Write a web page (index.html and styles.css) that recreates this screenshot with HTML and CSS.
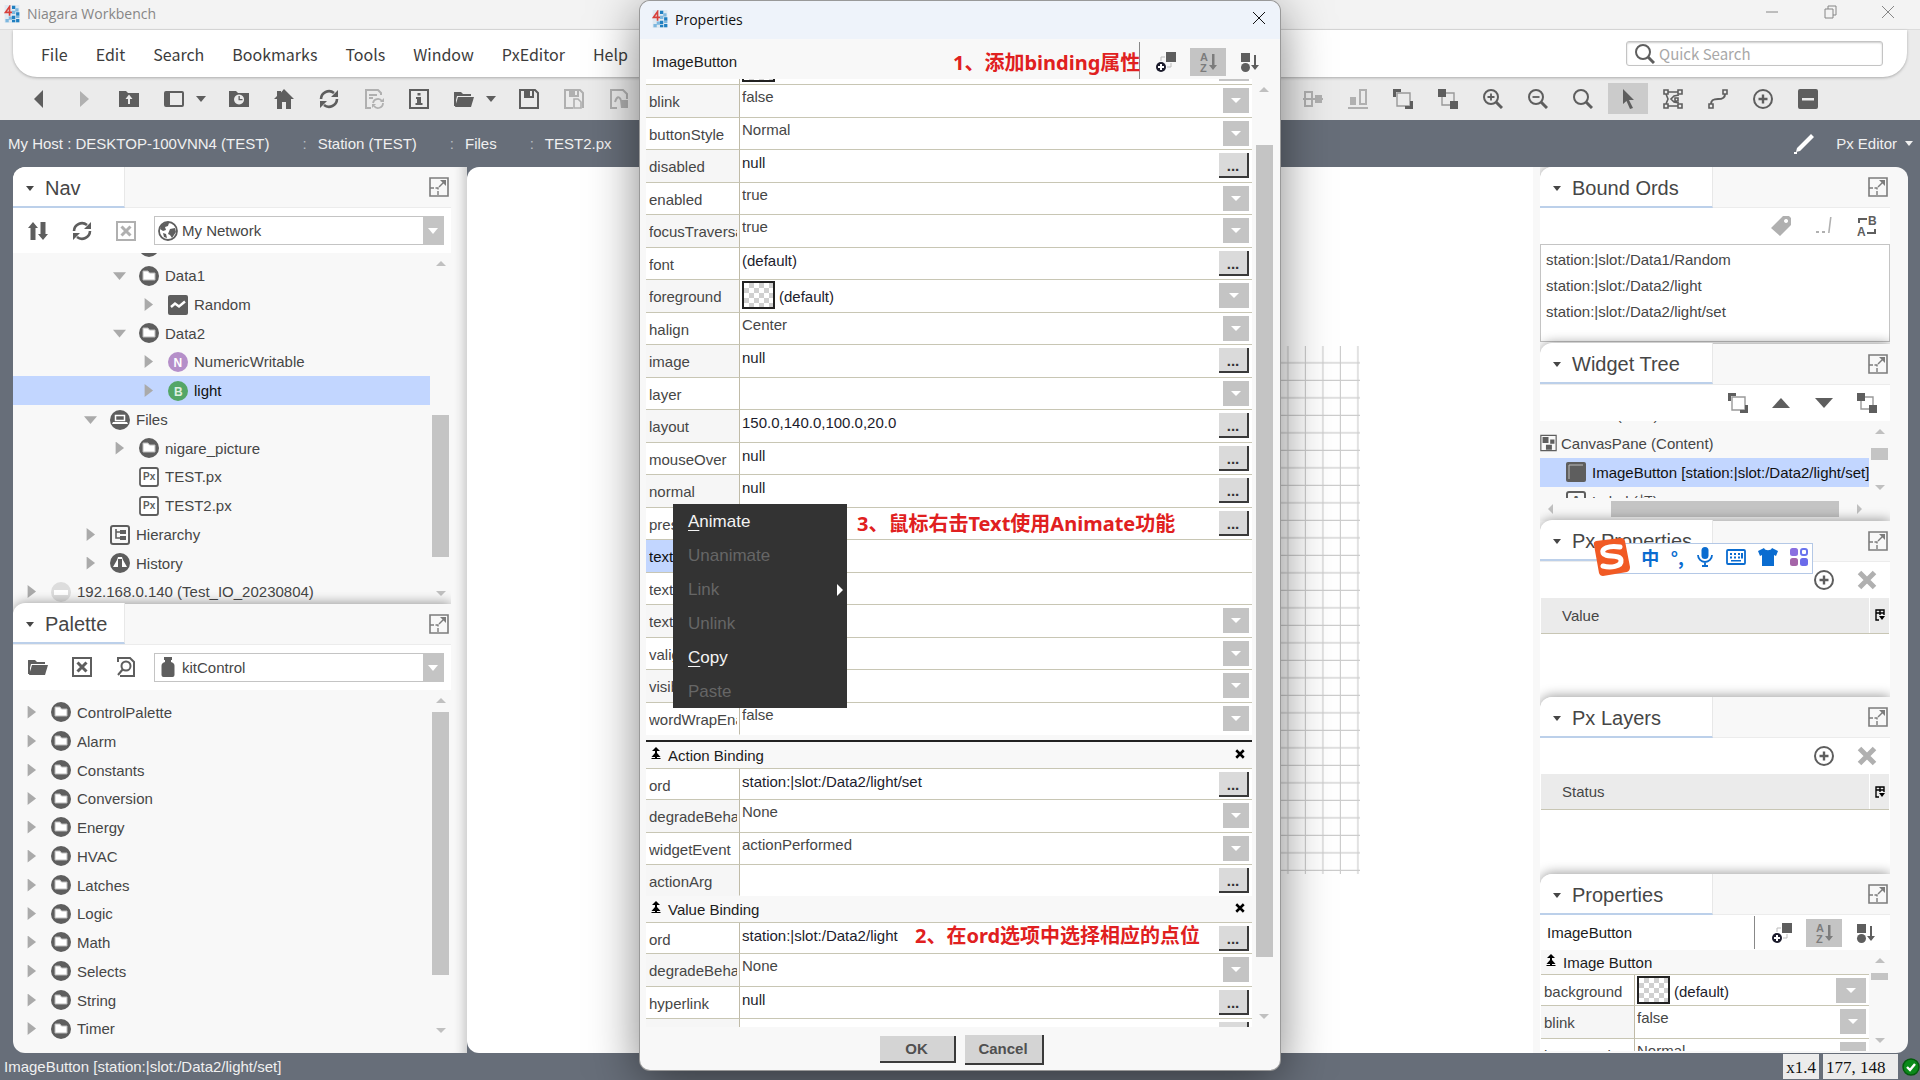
FILE: index.html
```
<!DOCTYPE html>
<html lang="zh-CN">
<head>
    <meta charset="UTF-8">
    <meta name="viewport" content="width=device-width, initial-scale=1.0">
    <title>Niagara Workbench</title>
    <link rel="stylesheet" href="styles.css">
</head>
<body>
    <!-- icon sprite -->
    <svg class="sprite" aria-hidden="true">
        <symbol id="i-logo" viewBox="0 0 18 22"><path fill="#dfe9f1" d="M0 0h18v22H0z"/><path fill="#1f7fc0" d="M9 1h4v4H9zM14 9h4v4h-4zM9 13h4v4H9zM14 17h4v4h-4zM9 18h4v3H9z"/><path fill="#7db7de" d="M13 4h4v4h-4zM9 7h4v4H9zM1 17h4v4H1zM5 14h4v4H5zM14 13h4v3h-4z"/><path fill="none" stroke="#d8403a" stroke-width="2" d="M6 13V2L1 9h8"/></symbol>
        <symbol id="i-back" viewBox="0 0 20 20"><path d="M14 1v18L5 10z"/></symbol>
        <symbol id="i-fwd" viewBox="0 0 20 20"><path d="M6 2v16l9-8z"/></symbol>
        <symbol id="i-folderup" viewBox="0 0 20 20"><path fill-rule="evenodd" d="M0 2h7l2 2h11v14H0zM10 5.500l-3.500 4.500H9v5h2v-5h2.500z"/></symbol>
        <symbol id="i-layout" viewBox="0 0 20 20"><path fill-rule="evenodd" d="M2 2h16a2 2 0 0 1 2 2v12a2 2 0 0 1-2 2H2a2 2 0 0 1-2-2V4a2 2 0 0 1 2-2zM6 4v12h12V4z"/></symbol>
        <symbol id="i-folderclock" viewBox="0 0 20 20"><path fill-rule="evenodd" d="M0 2h7l2 2h11v14H0zM10 5.500a5 5 0 1 0 .1 0zM9.500 7h1.300v3h2.700v1.300h-4z"/></symbol>
        <symbol id="i-home" viewBox="0 0 20 20"><path d="M10 0l10 10h-3v10h-5v-7H8v7H3V10H0l3-3V2h4v1.500z"/></symbol>
        <symbol id="i-refresh" viewBox="0 0 20 20"><path fill="none" stroke="currentColor" stroke-width="2.600" d="M2 10a8 8 0 0 1 13-6M18 10a8 8 0 0 1-13 6"/><path d="M19 1v7h-7zM1 19v-7h7z"/></symbol>
        <symbol id="i-docrefresh" viewBox="0 0 20 20"><path fill="none" stroke="currentColor" stroke-width="2" d="M7 19H2V1h12l3 3v2M5 6h8M5 9h4"/><path fill="none" stroke="currentColor" stroke-width="1.800" d="M9 14a5 5 0 0 1 9-2M19 14a5 5 0 0 1-9 3"/><path d="M20 9v4h-4zM8 19v-4h4z"/></symbol>
        <symbol id="i-info" viewBox="0 0 20 20"><path fill="none" stroke="currentColor" stroke-width="2" d="M1 1h18v18H1z"/><path d="M8.500 4h3v2.500h-3zM7 8h5v6h1.500v2h-7v-2H8v-4H7z"/></symbol>
        <symbol id="i-folder" viewBox="0 0 20 20"><path d="M0 3h7l2 2h8v2H3L1 15z"/><path d="M4 8h16l-3 10H1z"/><path d="M0 4h2v13H0z"/></symbol>
        <symbol id="i-save" viewBox="0 0 20 20"><path fill="none" stroke="currentColor" stroke-width="2" d="M1 1h15l3 3v15H1z"/><path fill-rule="evenodd" d="M5 1h10v8H5zM11 2v5h2V2z"/></symbol>
        <symbol id="i-savedoc" viewBox="0 0 20 20"><path fill="none" stroke="currentColor" stroke-width="2" d="M9 19H1V1h15l3 3v15"/><path fill-rule="evenodd" d="M5 1h10v7H5zM11 2v4h2V2z"/><path fill="none" stroke="currentColor" stroke-width="1.600" d="M10 10h4l3 3v6h-7z"/></symbol>
        <symbol id="i-docnote" viewBox="0 0 20 20"><path fill="none" stroke="currentColor" stroke-width="2" d="M8 19H2V1h12l4 4v5M6 13c2-6 4-6 6-2"/><path d="M11 11h8v8h-7z"/></symbol>
        <symbol id="i-alignmid" viewBox="0 0 20 20"><path fill="none" stroke="currentColor" stroke-width="2" d="M2 3h7v14H2zM0 10h11"/><path d="M12 6h7v8h-7zM10 9h10v2H10z"/></symbol>
        <symbol id="i-alignbot" viewBox="0 0 20 20"><path d="M0 18h20v2H0zM2 8h6v8H2z"/><path fill="none" stroke="currentColor" stroke-width="2" d="M12 1h6v14h-6z"/></symbol>
        <symbol id="i-front" viewBox="0 0 20 20"><path fill="none" stroke="#999" stroke-width="1.400" d="M4 4h13v13H4z"/><path d="M0 0h8v3H3v5H0zM20 20h-8v-3h5v-5h3z"/></symbol>
        <symbol id="i-backward" viewBox="0 0 20 20"><path fill="none" stroke="#999" stroke-width="1.400" d="M4 4h12v12H4z"/><path d="M0 0h8v8H0zM12 12h8v8h-8z"/></symbol>
        <symbol id="i-zoomin" viewBox="0 0 20 20"><g fill="none" stroke="currentColor"><circle cx="8" cy="8" r="7" stroke-width="2"/><path stroke-width="3" d="M13 13l6 6"/><path stroke-width="1.800" d="M4.500 8h7M8 4.500v7"/></g></symbol>
        <symbol id="i-zoomout" viewBox="0 0 20 20"><g fill="none" stroke="currentColor"><circle cx="8" cy="8" r="7" stroke-width="2"/><path stroke-width="3" d="M13 13l6 6"/><path stroke-width="1.800" d="M4.500 8h7"/></g></symbol>
        <symbol id="i-zoom" viewBox="0 0 20 20"><g fill="none" stroke="currentColor"><circle cx="8" cy="8" r="7" stroke-width="2"/><path stroke-width="3" d="M13 13l6 6"/></g></symbol>
        <symbol id="i-cursor" viewBox="0 0 20 20"><path d="M5 0l11 11h-5l4 8-3 1-3.500-8L5 15z"/></symbol>
        <symbol id="i-polygon" viewBox="0 0 20 20"><g fill="none" stroke="currentColor" stroke-width="1.600"><path d="M1 1h4v4H1zM15 1h4v4h-4zM1 15h4v4H1zM15 15h4v4h-4zM5 3h10M3 5l2 5-2 5M5 17h10"/><path d="M16 6l-5 1-3 3 3 3 5 1M12 9h3v3h-3z"/></g></symbol>
        <symbol id="i-path" viewBox="0 0 20 20"><g fill="none" stroke="currentColor"><path stroke-width="1.600" d="M15 1h4v4h-4zM1 15h4v4H1z"/><path stroke-width="2" d="M17 5c0 5-4 5-7 5s-7 0-7 5"/></g></symbol>
        <symbol id="i-plus" viewBox="0 0 20 20"><g fill="none" stroke="currentColor"><circle cx="10" cy="10" r="9" stroke-width="2"/><path stroke-width="2.400" d="M5.500 10h9M10 5.500v9"/></g></symbol>
        <symbol id="i-minus" viewBox="0 0 20 20"><path fill-rule="evenodd" d="M2 0h16a2 2 0 0 1 2 2v16a2 2 0 0 1-2 2H2a2 2 0 0 1-2-2V2a2 2 0 0 1 2-2zM4 9v2.500h12V9z"/></symbol>
        <symbol id="i-pencil" viewBox="0 0 20 20"><path d="M17 0l3 3-14 14-4 1 1-4zM0 18h3v2H0z"/></symbol>
        <symbol id="i-expand" viewBox="0 0 20 20"><g fill="none" stroke="currentColor"><path stroke-width="1.600" d="M1 1h18v18H1z"/><path stroke-dasharray="4 1.500" stroke-width="1.400" d="M1 11h8v8"/><path stroke-width="1.400" d="M10 10l6-6"/></g><path d="M17 3v6l-6-6z"/></symbol>
        <symbol id="i-updown" viewBox="0 0 20 20"><path d="M5 1l5 6H7.500v12h-5V7H0zM15 19l5-6h-2.500V1h-5v12H10z"/></symbol>
        <symbol id="i-boxx" viewBox="0 0 20 20"><g fill="none" stroke="currentColor"><path stroke-width="2" d="M1 1h18v18H1z"/><path stroke-width="3" d="M5.500 5.500l9 9M14.500 5.500l-9 9"/></g></symbol>
        <symbol id="i-docfind" viewBox="0 0 20 20"><g fill="none" stroke="currentColor" stroke-width="2"><path d="M2 5V1h12l4 4v14H4"/><circle cx="10" cy="9" r="4.500"/><path d="M7 12l-5 6"/></g></symbol>
        <symbol id="i-globe" viewBox="0 0 20 20"><circle cx="10" cy="10" r="9" fill="#fff" stroke="currentColor" stroke-width="1.800"/><path d="M3 5c3-4 6-3 8-3l-1 3-3 1 1 3-3 1-3-2zM12 8l5-1 1 4-4 6-2-3-2-1zM5 12l3 1 1 4-3-1z"/></symbol>
        <symbol id="i-jar" viewBox="0 0 20 20"><path d="M6 0h8v3h-1v2c3 1 3.500 2 3.500 4v9a2 2 0 0 1-2 2h-9a2 2 0 0 1-2-2V9c0-2 .5-3 3.500-4V3H6z"/></symbol>
        <symbol id="i-circlefolder" viewBox="0 0 20 20"><circle cx="10" cy="10" r="10"/><path fill="#fff" stroke="#bbb" d="M4 5h5l1.500 2H16v7H4z"/></symbol>
        <symbol id="i-wave" viewBox="0 0 20 20"><rect width="20" height="20" rx="2"/><path fill="none" stroke="#fff" stroke-width="2.400" d="M3 12l4-3.500 4 3 6-5"/></symbol>
        <symbol id="i-laptop" viewBox="0 0 20 20"><circle cx="10" cy="10" r="10"/><path fill="none" stroke="#fff" stroke-width="1.500" d="M5.500 5.500h9v5h-9z"/><path fill="#fff" d="M3 12h14l1 2H2z"/></symbol>
        <symbol id="i-hier" viewBox="0 0 20 20"><g fill="none" stroke="currentColor"><rect x="1" y="1" width="18" height="18" rx="2" stroke-width="2"/><path stroke-width="1.600" d="M6 4v9h5M6 7h5"/></g><path d="M10 5h6v4h-6zM10 11h6v4h-6z"/></symbol>
        <symbol id="i-hist" viewBox="0 0 20 20"><circle cx="10" cy="10" r="10"/><path fill="#fff" d="M8 4h4l1 3 4 7H3l4-7z"/><path d="M8 6h4v10H8z"/></symbol>
        <symbol id="i-drive" viewBox="0 0 20 20"><circle cx="10" cy="10" r="10"/><path fill="#fff" d="M3 8h14v5H3z"/></symbol>
        <symbol id="i-px" viewBox="0 0 20 20"><rect x="1" y="1" width="18" height="18" rx="2" fill="#fff" stroke="currentColor" stroke-width="1.800"/><text x="4" y="13" font-size="10" font-weight="bold" font-family="Liberation Sans, sans-serif">Px</text></symbol>
        <symbol id="i-n" viewBox="0 0 20 20"><circle cx="10" cy="10" r="10" fill="#b58fc9"/><text x="5.500" y="14.500" font-size="12" font-weight="bold" fill="#fff" font-family="Liberation Sans, sans-serif">N</text></symbol>
        <symbol id="i-b" viewBox="0 0 20 20"><circle cx="10" cy="10" r="10" fill="#54a667"/><text x="6" y="14.500" font-size="12" font-weight="bold" fill="#dff0e2" font-family="Liberation Sans, sans-serif">B</text></symbol>
        <symbol id="i-tag" viewBox="0 0 20 20"><path fill-rule="evenodd" d="M12 0h6l2 2v7L9 20 0 12zM15 3a2 2 0 1 0 .1 0z"/></symbol>
        <symbol id="i-rel" viewBox="0 0 20 20"><path d="M2 15h3v2H2zM8 15h3v2H8zM16 1h1.600l-2 16H14z"/></symbol>
        <symbol id="i-ab" viewBox="0 0 20 20"><g fill="none" stroke="currentColor" stroke-width="2"><path d="M2 7V3h8M18 13v4h-8"/></g><text x="0" y="20" font-size="12" font-weight="bold" font-family="Liberation Sans, sans-serif">A</text><text x="11" y="9" font-size="12" font-weight="bold" font-family="Liberation Sans, sans-serif">B</text></symbol>
        <symbol id="i-up" viewBox="0 0 20 20"><path d="M10 5l9 10H1z"/></symbol>
        <symbol id="i-down" viewBox="0 0 20 20"><path d="M10 15L1 5h18z"/></symbol>
        <symbol id="i-x" viewBox="0 0 20 20"><path fill="none" stroke="currentColor" stroke-width="5" d="M2.500 2.500l15 15M17.500 2.500l-15 15"/></symbol>
        <symbol id="i-pane" viewBox="0 0 20 20"><path fill="none" stroke="currentColor" stroke-width="1.400" d="M1 1h18v18H1z"/><path d="M3 3h7v7H3zM12 6h5v5h-5zM7 12h7v6H7z"/></symbol>
        <symbol id="i-btn" viewBox="0 0 20 20"><rect width="20" height="20" rx="2"/><path fill="none" stroke="#bbb" d="M3 17V3h14"/></symbol>
        <symbol id="i-label" viewBox="0 0 20 20"><rect x="1" y="1" width="18" height="18" rx="2" fill="none" stroke="currentColor" stroke-width="2"/><text x="5" y="15" font-size="14" font-weight="bold" font-family="Liberation Sans, sans-serif">A</text></symbol>
        <symbol id="i-addbind" viewBox="0 0 20 20"><path d="M10 0h10v10H10z"/><path fill="none" stroke="#bbb" d="M5 9V5h4M15 11v4h-4"/><circle cx="5" cy="15" r="5" fill="#1c1c2c"/><path stroke="#fff" stroke-width="2" d="M2 15h6M5 12v6"/></symbol>
        <symbol id="i-az" viewBox="0 0 20 20"><text x="2" y="9" font-size="11" font-weight="bold" font-family="Liberation Sans, sans-serif">A</text><text x="2" y="20" font-size="11" font-weight="bold" font-family="Liberation Sans, sans-serif">Z</text><path d="M14 2h2.500v11H19l-4 5-4-5h3z"/></symbol>
        <symbol id="i-sortcat" viewBox="0 0 20 20"><path d="M1 1h9v9H1zM14 3h2v10h3l-4 5-4-5h3z"/><circle cx="5.500" cy="15.500" r="4.500"/></symbol>
        <symbol id="i-collapse" viewBox="0 0 10 12"><path d="M5 0l4 4H6v2l3.500 4H6v1h3.500v1h-9v-1H4v-1H.5L4 6V4H1z"/></symbol>
        <symbol id="i-colmenu" viewBox="0 0 10 12"><path fill="none" stroke="#000" stroke-width="1.400" d="M4 11H1V1h8v5M1 4h8M5 1v5"/><path d="M4 7h6l-3 4z"/></symbol>
        <symbol id="i-mic" viewBox="0 0 20 20"><rect x="6.500" y="0" width="7" height="12" rx="3.500"/><path fill="none" stroke="currentColor" stroke-width="1.800" d="M3 8a7 7 0 0 0 14 0M10 15v3"/><path d="M7 18h6v2H7z"/></symbol>
        <symbol id="i-kbd" viewBox="0 0 20 20"><rect x="1" y="3" width="18" height="14" rx="1" fill="none" stroke="currentColor" stroke-width="1.800"/><path d="M4 6h2v2H4zM8 6h2v2H8zM12 6h2v2h-2zM4 9.500h2v2H4zM8 9.500h2v2H8zM12 9.500h2v2h-2zM15 6h2v5.500h-2zM5 13h10v1.600H5z"/></symbol>
        <symbol id="i-shirt" viewBox="0 0 20 20"><path d="M6 1c1 3 7 3 8 0l6 3-2 5-2-1v11H4V8L2 9 0 4z"/></symbol>
        <symbol id="i-apps" viewBox="0 0 20 20"><rect x="1" y="1" width="8" height="8" rx="2.500" fill="#8a6fe0"/><rect x="12" y="2" width="6" height="6" rx="2" fill="none" stroke="#6a74ee" stroke-width="2"/><rect x="1" y="11" width="8" height="8" rx="2.500" fill="#a565a8"/><rect x="11" y="11" width="8" height="8" rx="2.500" fill="#6b6bea"/></symbol>
        <symbol id="i-sogou" viewBox="0 0 38 38"><path fill="#f15a24" d="M2 7Q1 4 4 3L29 0q3 0 4 3l5 26q0 4-3 5L11 38q-3 0-4-3z"/><path fill="none" stroke="#fff" stroke-width="5" stroke-linecap="round" d="M28 9C16 7 9 11 11 15c2 5 17 1 18 7 1 7-11 8-18 6"/></symbol>
    </svg>

    <header class="titlebar">
        <svg class="logo"><use href="#i-logo"/></svg>
        <span>Niagara Workbench</span>
        <div class="win-controls">
            <button aria-label="Minimize"><svg viewBox="0 0 14 14"><path d="M1 7h12"/></svg></button>
            <button aria-label="Restore"><svg viewBox="0 0 14 14"><path d="M2 4h8v9H2zM5 4V1h8v9h-3"/></svg></button>
            <button aria-label="Close"><svg viewBox="0 0 14 14"><path d="M1 1l12 12M13 1L1 13"/></svg></button>
        </div>
    </header>

    <div class="menu-wrap">
        <nav class="menubar">
            <button>File</button>
            <button>Edit</button>
            <button>Search</button>
            <button>Bookmarks</button>
            <button>Tools</button>
            <button>Window</button>
            <button>PxEditor</button>
            <button>Help</button>
            <label class="search">
                <svg class="icon"><use href="#i-zoom"/></svg>
                <input type="text" placeholder="Quick Search" aria-label="Quick Search">
            </label>
        </nav>
    </div>

    <div class="toolbar">
        <button aria-label="Back"><svg class="icon"><use href="#i-back"/></svg></button>
        <button aria-label="Forward" disabled><svg class="icon"><use href="#i-fwd"/></svg></button>
        <button aria-label="Up level"><svg class="icon"><use href="#i-folderup"/></svg></button>
        <button aria-label="Side bars"><svg class="icon"><use href="#i-layout"/></svg></button>
        <button class="drop" aria-label="Side bars menu"></button>
        <button aria-label="Recent"><svg class="icon"><use href="#i-folderclock"/></svg></button>
        <button aria-label="Home"><svg class="icon"><use href="#i-home"/></svg></button>
        <button aria-label="Refresh"><svg class="icon"><use href="#i-refresh"/></svg></button>
        <button aria-label="Reload" disabled><svg class="icon"><use href="#i-docrefresh"/></svg></button>
        <button aria-label="Info"><svg class="icon"><use href="#i-info"/></svg></button>
        <button aria-label="Open"><svg class="icon"><use href="#i-folder"/></svg></button>
        <button class="drop" aria-label="Open menu"></button>
        <button aria-label="Save"><svg class="icon"><use href="#i-save"/></svg></button>
        <button aria-label="Save all" disabled><svg class="icon"><use href="#i-savedoc"/></svg></button>
        <button aria-label="Export" disabled><svg class="icon"><use href="#i-docnote"/></svg></button>
        <div class="tools-right">
            <button aria-label="Align middle" disabled><svg class="icon"><use href="#i-alignmid"/></svg></button>
            <button aria-label="Align bottom" disabled><svg class="icon"><use href="#i-alignbot"/></svg></button>
            <button aria-label="To front"><svg class="icon"><use href="#i-front"/></svg></button>
            <button aria-label="To back"><svg class="icon"><use href="#i-backward"/></svg></button>
            <button aria-label="Zoom in"><svg class="icon"><use href="#i-zoomin"/></svg></button>
            <button aria-label="Zoom out"><svg class="icon"><use href="#i-zoomout"/></svg></button>
            <button aria-label="Zoom reset"><svg class="icon"><use href="#i-zoom"/></svg></button>
            <button aria-label="Select" class="active"><svg class="icon"><use href="#i-cursor"/></svg></button>
            <button aria-label="Polygon"><svg class="icon"><use href="#i-polygon"/></svg></button>
            <button aria-label="Path"><svg class="icon"><use href="#i-path"/></svg></button>
            <button aria-label="Add point"><svg class="icon"><use href="#i-plus"/></svg></button>
            <button aria-label="Delete point"><svg class="icon"><use href="#i-minus"/></svg></button>
        </div>
    </div>

    <div class="locator">
        <a href="#">My Host : DESKTOP-100VNN4 (TEST)</a>
        <a href="#">Station (TEST)</a>
        <a href="#">Files</a>
        <a href="#">TEST2.px</a>
        <button class="view-pick">
            <svg class="icon"><use href="#i-pencil"/></svg>
            Px Editor
            <i class="caret"></i>
        </button>
    </div>

    <main class="workspace">
        <aside class="side left">
            <section class="pane nav">
                <header class="pane-head"><h2><i class="caret"></i>Nav</h2><button aria-label="Expand Nav"><svg class="icon"><use href="#i-expand"/></svg></button></header>
                <div class="pane-tools">
                    <button aria-label="Sort"><svg class="icon"><use href="#i-updown"/></svg></button>
                    <button aria-label="Refresh tree"><svg class="icon"><use href="#i-refresh"/></svg></button>
                    <button aria-label="Close tree" disabled><svg class="icon"><use href="#i-boxx"/></svg></button>
                    <div class="combo">
                        <svg class="icon"><use href="#i-globe"/></svg>
                        <select aria-label="Network"><option>My Network</option></select>
                    </div>
                </div>
                <div class="scroller">
                    <ul class="tree scrolled">
                        <li class="lv3"><i></i><svg class="icon"><use href="#i-circlefolder"/></svg></li>
                        <li class="lv3"><i class="open"></i><svg class="icon"><use href="#i-circlefolder"/></svg>Data1</li>
                        <li class="lv4"><i class="shut"></i><svg class="icon"><use href="#i-wave"/></svg>Random</li>
                        <li class="lv3"><i class="open"></i><svg class="icon"><use href="#i-circlefolder"/></svg>Data2</li>
                        <li class="lv4"><i class="shut"></i><svg class="icon"><use href="#i-n"/></svg>NumericWritable</li>
                        <li class="lv4 selected"><i class="shut"></i><svg class="icon"><use href="#i-b"/></svg>light</li>
                        <li class="lv2"><i class="open"></i><svg class="icon"><use href="#i-laptop"/></svg>Files</li>
                        <li class="lv3"><i class="shut"></i><svg class="icon"><use href="#i-circlefolder"/></svg>nigare_picture</li>
                        <li class="lv3"><i></i><svg class="icon"><use href="#i-px"/></svg>TEST.px</li>
                        <li class="lv3"><i></i><svg class="icon"><use href="#i-px"/></svg>TEST2.px</li>
                        <li class="lv2"><i class="shut"></i><svg class="icon"><use href="#i-hier"/></svg>Hierarchy</li>
                        <li class="lv2"><i class="shut"></i><svg class="icon"><use href="#i-hist"/></svg>History</li>
                        <li><i class="shut"></i><svg class="icon faded"><use href="#i-drive"/></svg>192.168.0.140 (Test_IO_20230804)</li>
                    </ul>
                    <div class="vbar"><span class="thumb thumb-nav"></span></div>
                </div>
            </section>
            <section class="pane palette">
                <header class="pane-head"><h2><i class="caret"></i>Palette</h2><button aria-label="Expand Palette"><svg class="icon"><use href="#i-expand"/></svg></button></header>
                <div class="pane-tools">
                    <button aria-label="Open palette"><svg class="icon"><use href="#i-folder"/></svg></button>
                    <button aria-label="Close palette"><svg class="icon"><use href="#i-boxx"/></svg></button>
                    <button aria-label="Preview"><svg class="icon"><use href="#i-docfind"/></svg></button>
                    <div class="combo">
                        <svg class="icon"><use href="#i-jar"/></svg>
                        <select aria-label="Palette"><option>kitControl</option></select>
                    </div>
                </div>
                <div class="scroller">
                    <ul class="tree">
                        <li><i class="shut"></i><svg class="icon"><use href="#i-circlefolder"/></svg>ControlPalette</li>
                        <li><i class="shut"></i><svg class="icon"><use href="#i-circlefolder"/></svg>Alarm</li>
                        <li><i class="shut"></i><svg class="icon"><use href="#i-circlefolder"/></svg>Constants</li>
                        <li><i class="shut"></i><svg class="icon"><use href="#i-circlefolder"/></svg>Conversion</li>
                        <li><i class="shut"></i><svg class="icon"><use href="#i-circlefolder"/></svg>Energy</li>
                        <li><i class="shut"></i><svg class="icon"><use href="#i-circlefolder"/></svg>HVAC</li>
                        <li><i class="shut"></i><svg class="icon"><use href="#i-circlefolder"/></svg>Latches</li>
                        <li><i class="shut"></i><svg class="icon"><use href="#i-circlefolder"/></svg>Logic</li>
                        <li><i class="shut"></i><svg class="icon"><use href="#i-circlefolder"/></svg>Math</li>
                        <li><i class="shut"></i><svg class="icon"><use href="#i-circlefolder"/></svg>Selects</li>
                        <li><i class="shut"></i><svg class="icon"><use href="#i-circlefolder"/></svg>String</li>
                        <li><i class="shut"></i><svg class="icon"><use href="#i-circlefolder"/></svg>Timer</li>
                    </ul>
                    <div class="vbar"><span class="thumb thumb-palette"></span></div>
                </div>
            </section>
        </aside>

        <div class="canvas">
            <svg class="grid" width="719" height="528">
                <defs>
                    <pattern id="cell" width="17.5" height="17.5" patternUnits="userSpaceOnUse">
                        <path d="M0 17H17.5M17 0V17.5" fill="none" stroke="#ccc" stroke-width="1.300"/>
                    </pattern>
                </defs>
                <rect width="719" height="528" fill="url(#cell)"/>
            </svg>
        </div>

        <aside class="side right">
            <section class="pane">
                <header class="pane-head"><h2><i class="caret"></i>Bound Ords</h2><button aria-label="Expand Bound Ords"><svg class="icon"><use href="#i-expand"/></svg></button></header>
                <div class="pane-tools end">
                    <button aria-label="Tag" disabled><svg class="icon"><use href="#i-tag"/></svg></button>
                    <button aria-label="Relativize" disabled><svg class="icon"><use href="#i-rel"/></svg></button>
                    <button aria-label="Replace"><svg class="icon"><use href="#i-ab"/></svg></button>
                </div>
                <ul class="ords">
                    <li>station:|slot:/Data1/Random</li>
                    <li>station:|slot:/Data2/light</li>
                    <li>station:|slot:/Data2/light/set</li>
                </ul>
            </section>
            <section class="pane">
                <header class="pane-head"><h2><i class="caret"></i>Widget Tree</h2><button aria-label="Expand Widget Tree"><svg class="icon"><use href="#i-expand"/></svg></button></header>
                <div class="pane-tools end">
                    <button aria-label="To front"><svg class="icon"><use href="#i-front"/></svg></button>
                    <button aria-label="Move up"><svg class="icon"><use href="#i-up"/></svg></button>
                    <button aria-label="Move down"><svg class="icon"><use href="#i-down"/></svg></button>
                    <button aria-label="To back"><svg class="icon"><use href="#i-backward"/></svg></button>
                </div>
                <div class="scroller">
                    <ul class="tree widgets">
                        <li>ScrollPane (Root)</li>
                        <li class="w1"><svg class="icon"><use href="#i-pane"/></svg>CanvasPane (Content)</li>
                        <li class="w2 selected"><svg class="icon"><use href="#i-btn"/></svg>ImageButton [station:|slot:/Data2/light/set]</li>
                        <li class="w2"><svg class="icon"><use href="#i-label"/></svg>Label (灯)</li>
                    </ul>
                    <div class="vbar"><span class="thumb thumb-widget"></span></div>
                </div>
                <div class="hbar"><span class="thumb"></span></div>
            </section>
            <section class="pane">
                <header class="pane-head"><h2><i class="caret"></i>Px Properties</h2><button aria-label="Expand Px Properties"><svg class="icon"><use href="#i-expand"/></svg></button></header>
                <div class="pane-tools end">
                    <button aria-label="Add property"><svg class="icon"><use href="#i-plus"/></svg></button>
                    <button aria-label="Remove property" disabled><svg class="icon"><use href="#i-x"/></svg></button>
                </div>
                <table class="list"><tr><th>Value</th><td><svg><use href="#i-colmenu"/></svg></td></tr></table>
            </section>
            <section class="pane">
                <header class="pane-head"><h2><i class="caret"></i>Px Layers</h2><button aria-label="Expand Px Layers"><svg class="icon"><use href="#i-expand"/></svg></button></header>
                <div class="pane-tools end">
                    <button aria-label="Add layer"><svg class="icon"><use href="#i-plus"/></svg></button>
                    <button aria-label="Remove layer" disabled><svg class="icon"><use href="#i-x"/></svg></button>
                </div>
                <table class="list"><tr><th>Status</th><td><svg><use href="#i-colmenu"/></svg></td></tr></table>
            </section>
            <section class="pane">
                <header class="pane-head"><h2><i class="caret"></i>Properties</h2><button aria-label="Expand Properties"><svg class="icon"><use href="#i-expand"/></svg></button></header>
                <div class="pane-tools obj">
                    <span>ImageButton</span>
                    <i class="rule"></i>
                    <button aria-label="Add binding"><svg class="icon"><use href="#i-addbind"/></svg></button>
                    <button aria-label="Sort by name" class="active"><svg class="icon"><use href="#i-az"/></svg></button>
                    <button aria-label="Sort by category"><svg class="icon"><use href="#i-sortcat"/></svg></button>
                </div>
                <div class="scroller">
                    <div class="sheet">
                        <h3><svg><use href="#i-collapse"/></svg>Image Button</h3>
                        <table class="props">
                            <tr><th><label for="s-bg">background</label></th><td><div class="cell"><i class="swatch"></i><select id="s-bg" class="wide"><option>(default)</option></select></div></td></tr>
                            <tr><th><label for="s-blink">blink</label></th><td><div class="cell"><select id="s-blink"><option>false</option></select></div></td></tr>
                            <tr><th><label for="s-style">buttonStyle</label></th><td><div class="cell"><select id="s-style"><option>Normal</option></select></div></td></tr>
                        </table>
                    </div>
                    <div class="vbar"><span class="thumb thumb-sheet"></span></div>
                </div>
            </section>
        </aside>
    </main>

    <footer class="statusbar">
        <span>ImageButton [station:|slot:/Data2/light/set]</span>
        <output>x1.4</output>
        <output class="pos">177, 148</output>
        <svg viewBox="0 0 18 18"><circle cx="9" cy="9" r="8" fill="#0b8a1a" stroke="#045c0c" stroke-width="1.500"/><path d="M5 9l3 3 5-6" fill="none" stroke="#fff" stroke-width="2.400"/></svg>
    </footer>

    <!-- input method bar -->
    <div class="ime">
        <svg class="sogou"><use href="#i-sogou"/></svg>
        <span>中</span>
        <span>°,</span>
        <svg><use href="#i-mic"/></svg>
        <svg><use href="#i-kbd"/></svg>
        <svg><use href="#i-shirt"/></svg>
        <svg class="apps"><use href="#i-apps"/></svg>
    </div>

    <div class="dialog" role="dialog" aria-label="Properties">
        <header class="dialog-title">
            <svg class="logo"><use href="#i-logo"/></svg>
            <span>Properties</span>
            <button aria-label="Close dialog"><svg viewBox="0 0 14 14"><path d="M1 1l12 12M13 1L1 13"/></svg></button>
        </header>
        <div class="dialog-tools obj">
            <span>ImageButton</span>
            <i class="rule"></i>
            <button aria-label="Add binding"><svg class="icon"><use href="#i-addbind"/></svg></button>
            <button aria-label="Sort by name" class="active"><svg class="icon"><use href="#i-az"/></svg></button>
            <button aria-label="Sort by category"><svg class="icon"><use href="#i-sortcat"/></svg></button>
        </div>
        <div class="scroller">
            <div class="sheet">
                <table class="props scrolled">
                    <tr><th><label for="p-bg">background</label></th><td><div class="cell"><i class="swatch"></i><select id="p-bg" class="wide"><option>(default)</option></select></div></td></tr>
                    <tr><th><label for="p-blink">blink</label></th><td><div class="cell"><select id="p-blink"><option>false</option></select></div></td></tr>
                    <tr><th><label for="p-style">buttonStyle</label></th><td><div class="cell"><select id="p-style"><option>Normal</option></select></div></td></tr>
                    <tr><th><label for="p-disabled">disabled</label></th><td><div class="cell"><input id="p-disabled" value="null"><button>...</button></div></td></tr>
                    <tr><th><label for="p-enabled">enabled</label></th><td><div class="cell"><select id="p-enabled"><option>true</option></select></div></td></tr>
                    <tr><th><label for="p-focus">focusTraversable</label></th><td><div class="cell"><select id="p-focus"><option>true</option></select></div></td></tr>
                    <tr><th><label for="p-font">font</label></th><td><div class="cell"><input id="p-font" value="(default)"><button>...</button></div></td></tr>
                    <tr><th><label for="p-fg">foreground</label></th><td><div class="cell"><i class="swatch"></i><select id="p-fg" class="wide"><option>(default)</option></select></div></td></tr>
                    <tr><th><label for="p-halign">halign</label></th><td><div class="cell"><select id="p-halign"><option>Center</option></select></div></td></tr>
                    <tr><th><label for="p-image">image</label></th><td><div class="cell"><input id="p-image" value="null"><button>...</button></div></td></tr>
                    <tr><th><label for="p-layer">layer</label></th><td><div class="cell"><select id="p-layer"><option></option></select></div></td></tr>
                    <tr><th><label for="p-layout">layout</label></th><td><div class="cell"><input id="p-layout" value="150.0,140.0,100.0,20.0"><button>...</button></div></td></tr>
                    <tr><th><label for="p-over">mouseOver</label></th><td><div class="cell"><input id="p-over" value="null"><button>...</button></div></td></tr>
                    <tr><th><label for="p-normal">normal</label></th><td><div class="cell"><input id="p-normal" value="null"><button>...</button></div></td></tr>
                    <tr><th><label for="p-pressed">pressed</label></th><td><div class="cell"><input id="p-pressed" value="null"><button>...</button></div></td></tr>
                    <tr class="selected"><th><label for="p-text">text</label></th><td><div class="cell"><input id="p-text"></div></td></tr>
                    <tr><th><label for="p-gap">textIconGap</label></th><td><div class="cell"><input id="p-gap"></div></td></tr>
                    <tr><th><label for="p-ticon">textToIconAlign</label></th><td><div class="cell"><select id="p-ticon"><option></option></select></div></td></tr>
                    <tr><th><label for="p-valign">valign</label></th><td><div class="cell"><select id="p-valign"><option></option></select></div></td></tr>
                    <tr><th><label for="p-visible">visible</label></th><td><div class="cell"><select id="p-visible"><option></option></select></div></td></tr>
                    <tr><th><label for="p-wrap">wordWrapEnabled</label></th><td><div class="cell"><select id="p-wrap"><option>false</option></select></div></td></tr>
                </table>
                <h3 class="first-binding"><svg><use href="#i-collapse"/></svg>Action Binding<button aria-label="Remove Action Binding"><svg><use href="#i-x"/></svg></button></h3>
                <table class="props binding">
                    <tr><th><label for="a-ord">ord</label></th><td><div class="cell"><input id="a-ord" value="station:|slot:/Data2/light/set"><button>...</button></div></td></tr>
                    <tr><th><label for="a-deg">degradeBehavior</label></th><td><div class="cell"><select id="a-deg"><option>None</option></select></div></td></tr>
                    <tr><th><label for="a-event">widgetEvent</label></th><td><div class="cell"><select id="a-event"><option>actionPerformed</option></select></div></td></tr>
                    <tr><th><label for="a-arg">actionArg</label></th><td><div class="cell"><input id="a-arg"><button>...</button></div></td></tr>
                </table>
                <h3><svg><use href="#i-collapse"/></svg>Value Binding<button aria-label="Remove Value Binding"><svg><use href="#i-x"/></svg></button></h3>
                <table class="props binding">
                    <tr><th><label for="v-ord">ord</label></th><td><div class="cell"><input id="v-ord" value="station:|slot:/Data2/light"><button>...</button></div></td></tr>
                    <tr><th><label for="v-deg">degradeBehavior</label></th><td><div class="cell"><select id="v-deg"><option>None</option></select></div></td></tr>
                    <tr><th><label for="v-link">hyperlink</label></th><td><div class="cell"><input id="v-link" value="null"><button>...</button></div></td></tr>
                    <tr><th></th><td><div class="cell"><input aria-label="Popup"><button>...</button></div></td></tr>
                </table>
            </div>
            <div class="vbar"><span class="thumb thumb-dialog"></span></div>
        </div>
        <footer class="dialog-actions">
            <button>OK</button>
            <button class="cancel">Cancel</button>
        </footer>

        <div class="context-menu" role="menu">
            <button role="menuitem"><u>A</u>nimate</button>
            <button role="menuitem" disabled>Unanimate</button>
            <button role="menuitem" class="sub" disabled>Link</button>
            <button role="menuitem" disabled>Unlink</button>
            <button role="menuitem"><u>C</u>opy</button>
            <button role="menuitem" disabled>Paste</button>
        </div>

        <p class="note note-1">1、添加binding属性</p>
        <p class="note note-2">2、在ord选项中选择相应的点位</p>
        <p class="note note-3">3、鼠标右击Text使用Animate功能</p>
    </div>
</body>
</html>
```
FILE: styles.css
```
* {
    box-sizing: border-box;
}

body {
    margin: 0;
    height: 100vh;
    display: flex;
    flex-direction: column;
    overflow: hidden;
    position: relative;
    background-color: #ebebeb;
    color: #464646;
    font-family: "Liberation Sans", "Noto Sans CJK SC", sans-serif;
    font-size: 15px;
}

button, input, select {
    font: inherit;
    color: inherit;
    background: none;
    border: none;
    border-radius: 0;
    padding: 0;
    margin: 0;
    outline: none;
}

h2, h3, p, ul {
    margin: 0;
    padding: 0;
    font-weight: normal;
    list-style: none;
}

svg {
    fill: currentColor;
    flex: none;
}

.sprite {
    position: absolute;
    width: 0;
    height: 0;
}

.icon {
    width: 20px;
    height: 20px;
    color: #5e5e5e;
    display: block;
}

button:disabled .icon {
    color: #b0b0b0;
}

.caret {
    display: inline-block;
    border: 4px solid transparent;
    border-top: 5px solid currentColor;
    border-bottom: 0;
}

/* window frame */
.titlebar {
    flex: none;
    height: 30px;
    display: flex;
    align-items: center;
    gap: 6px;
    padding: 0 0 2px 3px;
    background-color: #f3f3f3;
    border-bottom: 1px solid #dcdcdc;
    color: #868686;
    font-family: "Open Sans", sans-serif;
    font-size: 14px;
}

.logo {
    width: 18px;
    height: 18px;
}

.win-controls {
    display: flex;
    margin-left: auto;
    padding-right: 3px;
}

.win-controls button {
    width: 58px;
    height: 28px;
}

.win-controls svg, .dialog-title button svg {
    width: 14px;
    height: 14px;
    fill: none;
    stroke: currentColor;
}

.menu-wrap {
    flex: none;
    padding: 0 13px;
}

.menubar {
    height: 47px;
    display: flex;
    align-items: center;
    gap: 28px;
    padding: 0 24px 0 28px;
    background-color: #fff;
    border-radius: 0 0 24px 24px;
    box-shadow: 0 1px 3px #aaa;
    font-family: "Noto Sans CJK SC", sans-serif;
    font-size: 16px;
    color: #3c3c3c;
}

.search {
    width: 257px;
    height: 25px;
    margin-left: auto;
    display: flex;
    align-items: center;
    gap: 4px;
    padding: 0 8px;
    border: 1px solid #c4c4c4;
    border-radius: 3px;
    box-shadow: inset 0 1px 2px #ccc;
    font-size: 15px;
}

.search input {
    flex: 1;
    min-width: 0;
}

.search input::placeholder {
    color: #a8a8a8;
}

.toolbar {
    flex: none;
    height: 43px;
    display: flex;
    align-items: center;
    padding: 0 90px 0 16px;
}

.toolbar button {
    width: 45px;
    height: 31px;
    display: flex;
    align-items: center;
    justify-content: center;
    color: #5e5e5e;
}

.toolbar .drop {
    width: 20px;
    justify-content: flex-start;
}

.toolbar .drop::after {
    content: "";
    border: 5px solid transparent;
    border-top: 6px solid #5e5e5e;
    border-bottom: 0;
}

.tools-right {
    display: flex;
    margin-left: auto;
}

.toolbar .active {
    background: linear-gradient(#cbcbcb, #cbcbcb) center / 40px 31px no-repeat;
}

.locator {
    flex: none;
    height: 47px;
    display: flex;
    align-items: center;
    padding: 0 7px 0 8px;
    background-color: #676e79;
    color: #f0f0f0;
}

.locator a {
    color: inherit;
    text-decoration: none;
}

.locator a + a::before {
    content: ":";
    padding: 0 11px 0 33px;
    color: #b8bcc2;
}

.view-pick {
    margin-left: auto;
    display: flex;
    align-items: center;
    gap: 8px;
}

.view-pick .icon {
    color: #fff;
    margin-right: 14px;
}

/* workspace */
.workspace {
    flex: 1;
    min-height: 0;
    display: flex;
    padding: 0 12px 0 13px;
    background-color: #676e79;
}

.side {
    display: flex;
    flex-direction: column;
    flex: none;
    background-color: #f8f8f8;
    overflow: hidden;
}

.left {
    width: 454px;
    padding-right: 16px;
    border-radius: 12px 0 0 12px;
    box-shadow: inset -12px 0 10px -8px #ccc;
}

.right {
    width: 375px;
    padding: 0 18px 2px 7px;
    border-radius: 0 12px 12px 0;
}

.canvas {
    flex: 1;
    min-width: 0;
    display: flex;
    align-items: center;
    justify-content: center;
    background-color: #fff;
    border-radius: 12px 0 0 12px;
    overflow: hidden;
}

.grid {
    display: block;
}

.pane {
    flex: 1 1 0;
    min-height: 0;
    display: flex;
    flex-direction: column;
    clip-path: inset(-20px 0 0 0);
}

.nav {
    flex-grow: 34;
}

.palette {
    flex-grow: 35;
}

.right .pane {
    background-color: #fff;
}

.pane-head {
    flex: none;
    height: 41px;
    display: flex;
    align-items: center;
    justify-content: space-between;
    padding-right: 2px;
    border-radius: 12px 0 0 0;
    border-bottom: 1px solid #ececec;
    background-color: #f8f8f8;
    box-shadow: 0 -1px 12px rgba(0, 0, 0, 0.4);
}

.pane-head h2 {
    width: 112px;
    height: 41px;
    display: flex;
    align-items: center;
    gap: 11px;
    padding: 4px 0 0 13px;
    background-color: #fff;
    border-radius: 12px 0 0 0;
    border-bottom: 2px solid #bcd0ea;
    border-right: 1px solid #e8e8e8;
    font-size: 20px;
    white-space: nowrap;
}

.right .pane-head h2 {
    width: 173px;
}

.pane-head .icon {
    color: #7c7c7c;
}

.pane-tools {
    flex: none;
    height: 45px;
    display: flex;
    align-items: center;
    padding: 0 7px 0 3px;
    background-color: #fff;
}

.pane-tools button {
    width: 44px;
    display: flex;
    justify-content: center;
}

.pane-tools.end {
    height: 36px;
    justify-content: flex-end;
    padding-right: 2px;
}

.pane-tools.end button {
    width: 43px;
}

.combo {
    flex: 1;
    height: 29px;
    display: flex;
    align-items: center;
    margin-left: 6px;
    padding-left: 3px;
    border: 1px solid #c4c4c4;
}

.combo select {
    flex: 1;
    height: 27px;
    padding-left: 4px;
    appearance: none;
    background: url("data:image/svg+xml,%3Csvg xmlns='http://www.w3.org/2000/svg' width='20' height='27'%3E%3Crect width='20' height='27' fill='%23c4c4c4'/%3E%3Cpath d='M5 11h10l-5 6z' fill='%23fff'/%3E%3C/svg%3E") right center no-repeat;
}

.scroller {
    flex: 1;
    min-height: 0;
    display: flex;
    overflow: hidden;
}

.tree {
    flex: 1;
    min-width: 0;
    padding-top: 8px;
}

.tree.scrolled {
    padding: 0;
    margin-top: -21px;
}

.tree li {
    height: 29px;
    display: flex;
    align-items: center;
    gap: 6px;
    padding-left: 12px;
    white-space: nowrap;
}

.tree li:nth-child(4n) {
    height: 28px;
}

.tree li i {
    width: 13px;
    height: 13px;
    margin-right: 7px;
    background-color: #aaa;
    clip-path: polygon(0 0, 0 0, 0 0);
}

.tree li .open {
    clip-path: polygon(0 25%, 100% 25%, 50% 85%);
}

.tree li .shut {
    clip-path: polygon(20% 0, 85% 50%, 20% 100%);
}

.tree .lv2 {
    padding-left: 71px;
}

.tree .lv3 {
    padding-left: 100px;
}

.tree .lv4 {
    padding-left: 129px;
}

.tree .selected {
    background-color: #c2d6ff;
    color: #111;
}

.icon.faded {
    color: #ddd;
}

.vbar {
    flex: none;
    width: 21px;
    display: flex;
    flex-direction: column;
    align-items: center;
    padding: 8px 0;
    background-color: #f8f8f8;
}

.vbar::before, .vbar::after {
    content: "";
    flex: none;
    border: 5px solid transparent;
    border-bottom: 5px solid #c0c0c0;
    border-top: 0;
}

.vbar::after {
    border-top: 5px solid #c0c0c0;
    border-bottom: 0;
    margin-top: auto;
}

.palette .vbar {
    padding-bottom: 20px;
}

.thumb {
    width: 17px;
    background-color: #c4c4c4;
}

.thumb-nav {
    height: 142px;
    margin-top: 149px;
}

.thumb-palette {
    height: 263px;
    margin-top: 9px;
}

.thumb-widget {
    height: 12px;
    margin-top: 14px;
}

.thumb-sheet {
    height: 7px;
    margin-top: 10px;
}

.thumb-dialog {
    height: 812px;
    margin-top: 53px;
}

.ords {
    flex: 1;
    padding: 2px 5px;
    border: 1px solid #c4c4c4;
    margin-bottom: 2px;
}

.ords li {
    height: 26px;
    line-height: 26px;
}

.widgets {
    padding: 0;
    margin-top: -21px;
    background-color: #f8f8f8;
}

.tree.widgets li {
    padding-left: 0;
    overflow: hidden;
}

.tree.widgets .w1 {
    padding-left: 0;
    gap: 4px;
}

.w1 .icon {
    width: 17px;
}

.tree.widgets .w2 {
    padding-left: 26px;
}

.hbar {
    flex: none;
    height: 23px;
    display: flex;
    align-items: center;
    padding: 0 28px 0 8px;
    background-color: #f8f8f8;
}

.hbar::before, .hbar::after {
    content: "";
    border: 5px solid transparent;
    border-right: 5px solid #c0c0c0;
    border-left: 0;
}

.hbar::after {
    border-left: 5px solid #c0c0c0;
    border-right: 0;
    margin-left: auto;
}

.hbar .thumb {
    width: 228px;
    height: 16px;
    margin-left: 58px;
}

.list {
    width: calc(100% - 2px);
    margin: 0 1px;
    border-spacing: 0;
    border-bottom: 1px solid #c8c6b4;
    background-color: #ebebeb;
}

.list th {
    height: 35px;
    padding: 0 21px;
    text-align: left;
    font-weight: normal;
}

.list td {
    width: 20px;
    padding: 0 0 0 5px;
    border-left: 1px solid #fff;
}

.list svg {
    width: 10px;
    height: 12px;
    display: block;
    color: #000;
}

/* property sheets */
.obj {
    color: #1c1c1c;
}

.obj span {
    margin-right: auto;
}

.obj .rule {
    width: 1px;
    height: 33px;
    margin-right: 3px;
    background-color: #888;
}

.obj button {
    width: 36px;
    height: 28px;
    display: flex;
    align-items: center;
    justify-content: center;
}

.obj .active {
    background-color: #c4c4c4;
}

.obj .active .icon {
    color: #7c7c7c;
}

.pane-tools.obj {
    height: 35px;
    gap: 6px;
    padding: 0 6px 0 7px;
}

.sheet {
    flex: 1;
    min-width: 0;
    padding-left: 1px;
}

.sheet h3 {
    height: 27px;
    display: flex;
    align-items: center;
    gap: 7px;
    padding: 0 5px;
    background-color: #f8f8f8;
    border-bottom: 1px solid #c8c6b4;
    font-size: 15px;
    color: #1c1c1c;
}

.sheet h3 > svg {
    width: 10px;
    height: 12px;
    margin-bottom: 5px;
    color: #000;
}

.sheet h3 button {
    margin: 0 0 3px auto;
}

.sheet h3 button svg {
    width: 10px;
    height: 10px;
    display: block;
    color: #000;
}

.right .sheet h3 {
    height: 25px;
}

.sheet .first-binding {
    height: 29px;
    margin-top: 5px;
    border-top: 2px solid #222;
}

.props {
    width: 100%;
    table-layout: fixed;
    border-spacing: 0;
    background-color: #fff;
}

.props.scrolled {
    margin-top: -26px;
}

.props th, .props td {
    height: 32px;
    padding: 0;
    border-bottom: 1px solid #c8c6b4;
    vertical-align: top;
}

.props tr:nth-child(even) > * {
    height: 33px;
}

.props tr:last-child > * {
    border-bottom-color: transparent;
}

.binding tr:first-child > *, .binding tr:last-child > *, .right .props tr:first-child > * {
    height: 31px;
}

.props th {
    width: 94px;
    padding: 8px 2px 0 3px;
    overflow: hidden;
    border-right: 1px solid #c0bba8;
    font-weight: normal;
    text-align: left;
    white-space: nowrap;
}

.props label {
    display: block;
    overflow: hidden;
}

.props tr:nth-child(even) th {
    background-color: #f6f6f6;
}

.props tr.selected:nth-child(even) th {
    background-color: #c2d6ff;
    color: #111;
}

.cell {
    display: flex;
    height: 28px;
    padding: 3px 3px 0 2px;
}

.cell input {
    flex: 1;
    min-width: 0;
    height: 19px;
    color: #1c1c2c;
}

.cell button {
    width: 30px;
    height: 25px;
    line-height: 25px;
    background-color: #dadada;
    border: solid #3a3a3a;
    border-width: 0 2px 2px 0;
    color: #333;
    font-weight: bold;
}

.cell select {
    flex: 1;
    height: 25px;
    padding-bottom: 8px;
    appearance: none;
    background: url("data:image/svg+xml,%3Csvg xmlns='http://www.w3.org/2000/svg' width='26' height='25'%3E%3Crect width='26' height='25' fill='%23c4c4c4'/%3E%3Cpath d='M8 10h10l-5 5z' fill='%23fff'/%3E%3C/svg%3E") right center no-repeat;
}

.cell .wide {
    padding: 2px 0 0 4px;
    color: #1c1c2c;
    background-image: url("data:image/svg+xml,%3Csvg xmlns='http://www.w3.org/2000/svg' width='30' height='25'%3E%3Crect width='30' height='25' fill='%23c4c4c4'/%3E%3Cpath d='M10 10h10l-5 5z' fill='%23fff'/%3E%3C/svg%3E");
}

.swatch {
    width: 33px;
    height: 28px;
    margin-top: -2px;
    border: 2px solid #222;
    background: repeating-conic-gradient(#d0d0d0 0 25%, #fff 0 50%) 0 0 / 10px 10px;
}

/* status bar */
.statusbar {
    flex: none;
    height: 27px;
    display: flex;
    align-items: center;
    gap: 4px;
    padding-left: 4px;
    background-color: #676e79;
    color: #f0f0f0;
}

.statusbar span {
    margin-right: auto;
}

.statusbar output {
    height: 25px;
    line-height: 27px;
    padding: 0 3px;
    background-color: #ececec;
    color: #111;
    font-family: "Liberation Serif", serif;
    font-size: 17px;
}

.statusbar .pos {
    width: 75px;
}

.statusbar svg {
    width: 18px;
    height: 18px;
}

.ime {
    position: absolute;
    top: 538px;
    right: 107px;
    width: 221px;
    height: 37px;
    display: flex;
    align-items: center;
    justify-content: space-between;
    padding-right: 4px;
    background: linear-gradient(#fff, #fff) 21px 5px / 200px 31px no-repeat;
    color: #0a6cd0;
    font-family: "Noto Sans CJK SC", sans-serif;
    font-size: 18px;
    font-weight: bold;
}

.ime::before {
    content: "";
    position: absolute;
    inset: 5px 0 1px 21px;
    border: 1px solid #b4c8e6;
}

.ime svg {
    width: 20px;
    height: 20px;
}

.ime .sogou {
    width: 38px;
    height: 38px;
    position: relative;
}

/* dialog */
.dialog {
    position: absolute;
    top: 1px;
    bottom: 10px;
    left: 50%;
    width: 640px;
    margin-left: -320px;
    display: flex;
    flex-direction: column;
    background-color: #f8f8f8;
    border-radius: 10px;
    box-shadow: 0 0 0 1px #999, 0 10px 50px rgba(0, 0, 0, 0.5);
}

.dialog-title {
    flex: none;
    height: 38px;
    display: flex;
    align-items: center;
    gap: 6px;
    padding: 0 14px 2px 11px;
    border-radius: 10px 10px 0 0;
    background-color: #eef3fa;
    color: #111;
    font-family: "Open Sans", sans-serif;
    font-size: 14px;
}

.dialog-title button {
    margin-left: auto;
}

.dialog-tools {
    flex: none;
    height: 40px;
    display: flex;
    align-items: center;
    gap: 6px;
    padding: 5px 12px 0 12px;
}

.dialog-tools .rule {
    height: 40px;
    margin-right: 2px;
}

.dialog .scroller {
    padding: 0 5px;
}

.dialog .sheet h3 {
    padding-right: 7px;
}

.dialog .vbar {
    width: 24px;
    margin-right: -1px;
}

.dialog-actions {
    flex: none;
    height: 43px;
    display: flex;
    align-items: center;
    justify-content: center;
    gap: 9px;
    padding: 2px 0 0 3px;
}

.dialog-actions button {
    width: 76px;
    height: 27px;
    background-color: #d4d4d4;
    border: solid #3a3a3a;
    border-width: 0 2px 2px 0;
    color: #505050;
    font-weight: bold;
}

.dialog-actions .cancel {
    width: 79px;
    height: 30px;
}

.context-menu {
    position: absolute;
    top: 503px;
    left: 33px;
    width: 174px;
    display: flex;
    flex-direction: column;
    background-color: #333;
    color: #f4f4f4;
    font-size: 17px;
}

.context-menu button {
    height: 34px;
    padding: 2px 0 0 15px;
    text-align: left;
}

.context-menu button:disabled {
    color: #666;
}

.context-menu u {
    text-underline-offset: 3px;
}

.context-menu .sub {
    display: flex;
    align-items: center;
    justify-content: space-between;
    padding-right: 4px;
}

.context-menu .sub::after {
    content: "";
    border: 6px solid transparent;
    border-left: 6px solid #fff;
    border-right: 0;
}

.note {
    position: absolute;
    color: #e02020;
    font-family: "Noto Sans", "Noto Sans CJK SC", sans-serif;
    font-size: 20px;
    font-weight: bold;
    line-height: 28px;
    white-space: nowrap;
}

.note-1 {
    top: 48px;
    left: 313px;
}

.note-2 {
    top: 921px;
    left: 275px;
}

.note-3 {
    top: 509px;
    left: 217px;
}
```
